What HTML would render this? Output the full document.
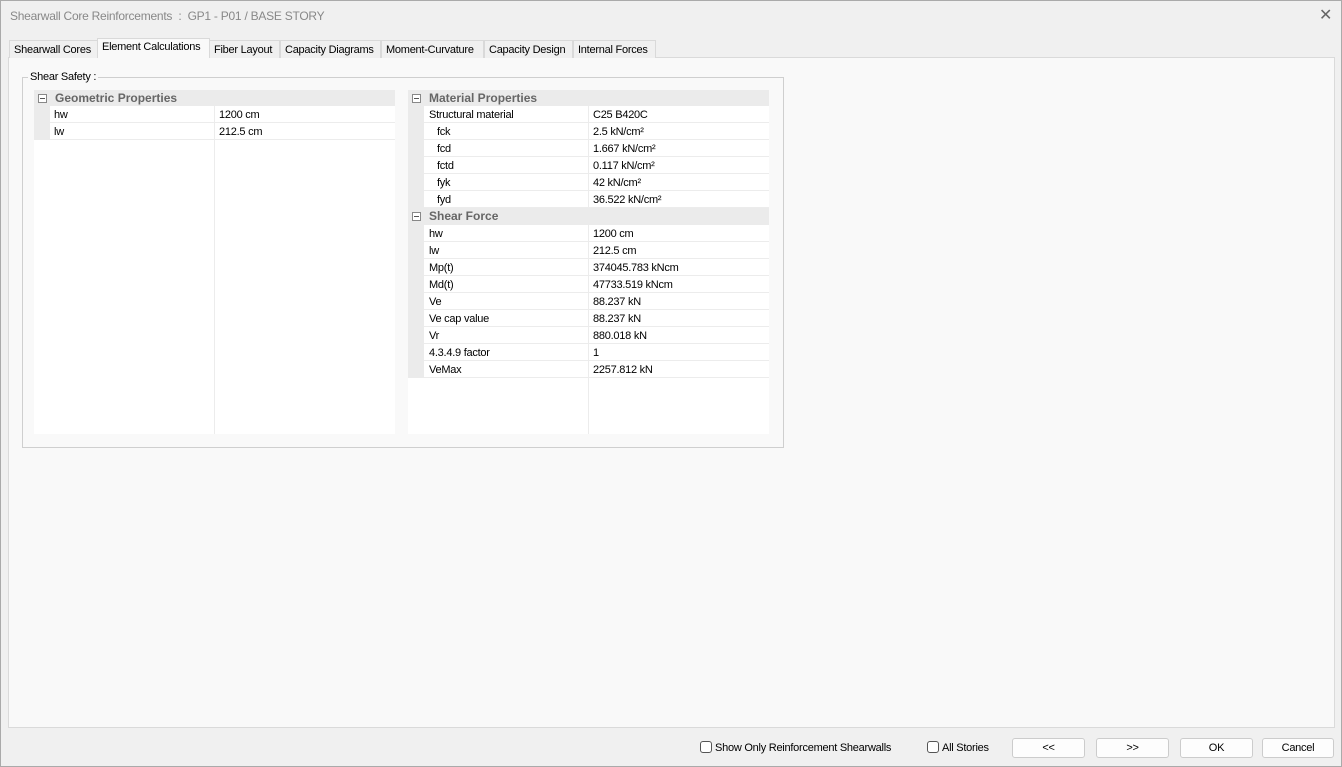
<!DOCTYPE html><html><head><style>
*{box-sizing:border-box;margin:0;padding:0}
body{width:1342px;height:767px;background:#f0f0f0;font-family:"Liberation Sans",sans-serif;font-size:11px;letter-spacing:-0.25px;color:#000;position:relative;overflow:hidden}
.abs{position:absolute}
.win{left:0;top:0;width:1342px;height:767px;border:1px solid #aaa;background:#f0f0f0}
.title{left:10px;top:9px;font-size:12px;color:#888}
.tab{top:40px;height:18px;border:1px solid #d9d9d9;border-bottom:none;background:#f0f0f0;padding:3px 0 0 4px;white-space:nowrap;overflow:hidden}
.tab.sel{top:38px;height:20px;background:#f9f9f9;padding-top:2px}
.panel{left:8px;top:57px;width:1327px;height:671px;border:1px solid #dadada;background:#f9f9f9}
.grp{left:22px;top:77px;width:762px;height:371px;border:1px solid #cfcfcf}
.grid{background:#fff}
.row{position:absolute;left:0;height:17px;border-bottom:1px solid #ececec;width:100%}
.row span{position:absolute;top:3px}
.hdr{background:#ebebeb;border:none}
.hdr b{position:absolute;left:21px;top:1px;font-size:12px;color:#666;letter-spacing:0}
.box{position:absolute;left:4px;top:4px;width:9px;height:9px;border:1px solid #888;background:#fff}
.box:after{content:"";position:absolute;left:1px;top:3px;width:5px;height:1px;background:#555}
.gut{position:absolute;left:0;width:16px;background:#ebebeb}
.btn{top:738px;height:20px;border:1px solid #ccc;border-radius:3px;background:#fdfdfd;text-align:center;padding-top:3px}
.cb{top:741px;width:12px;height:12px;border:1px solid #555;border-radius:3px;background:#fff}
</style></head><body>
<div class="abs win"></div>
<div class="abs title">Shearwall Core Reinforcements &nbsp;:&nbsp; GP1 - P01 / BASE STORY</div>
<div class="abs" style="left:1319px;top:5px;font-size:16px;color:#666">✕</div>
<div class="abs panel"></div>
<div class="abs tab" style="left:9px;width:89px">Shearwall Cores</div>
<div class="abs tab sel" style="left:97px;width:113px">Element Calculations</div>
<div class="abs tab" style="left:209px;width:71px">Fiber Layout</div>
<div class="abs tab" style="left:280px;width:101px">Capacity Diagrams</div>
<div class="abs tab" style="left:381px;width:103px">Moment-Curvature</div>
<div class="abs tab" style="left:484px;width:89px">Capacity Design</div>
<div class="abs tab" style="left:573px;width:83px">Internal Forces</div>
<div class="abs grp"></div>
<div class="abs" style="left:28px;top:71px;background:#f9f9f9;padding:0 2px">Shear Safety :</div>

<div class="abs grid" style="left:34px;top:90px;width:361px;height:344px">
<div class="gut" style="top:16px;height:34px"></div>
<div style="position:absolute;left:180px;top:16px;width:1px;height:328px;background:#ececec"></div>
<div class="row hdr" style="top:0;height:16px"><i class="box"></i><b>Geometric Properties</b></div>
<div class="row" style="top:16px;left:16px;width:345px"><span style="left:4px">hw</span><span style="left:169px">1200 cm</span></div>
<div class="row" style="top:33px;left:16px;width:345px"><span style="left:4px">lw</span><span style="left:169px">212.5 cm</span></div>
</div>

<div class="abs grid" style="left:408px;top:90px;width:361px;height:344px">
<div class="gut" style="top:16px;height:102px"></div>
<div class="gut" style="top:135px;height:153px"></div>
<div style="position:absolute;left:180px;top:16px;width:1px;height:328px;background:#ececec"></div>
<div class="row hdr" style="top:0;height:16px"><i class="box"></i><b>Material Properties</b></div>
<div class="row" style="top:16px;left:16px;width:345px"><span style="left:5px">Structural material</span><span style="left:169px">C25 B420C</span></div>
<div class="row" style="top:33px;left:16px;width:345px"><span style="left:13px">fck</span><span style="left:169px">2.5 kN/cm²</span></div>
<div class="row" style="top:50px;left:16px;width:345px"><span style="left:13px">fcd</span><span style="left:169px">1.667 kN/cm²</span></div>
<div class="row" style="top:67px;left:16px;width:345px"><span style="left:13px">fctd</span><span style="left:169px">0.117 kN/cm²</span></div>
<div class="row" style="top:84px;left:16px;width:345px"><span style="left:13px">fyk</span><span style="left:169px">42 kN/cm²</span></div>
<div class="row" style="top:101px;left:16px;width:345px"><span style="left:13px">fyd</span><span style="left:169px">36.522 kN/cm²</span></div>
<div class="row hdr" style="top:118px;height:17px"><i class="box"></i><b>Shear Force</b></div>
<div class="row" style="top:135px;left:16px;width:345px"><span style="left:5px">hw</span><span style="left:169px">1200 cm</span></div>
<div class="row" style="top:152px;left:16px;width:345px"><span style="left:5px">lw</span><span style="left:169px">212.5 cm</span></div>
<div class="row" style="top:169px;left:16px;width:345px"><span style="left:5px">Mp(t)</span><span style="left:169px">374045.783 kNcm</span></div>
<div class="row" style="top:186px;left:16px;width:345px"><span style="left:5px">Md(t)</span><span style="left:169px">47733.519 kNcm</span></div>
<div class="row" style="top:203px;left:16px;width:345px"><span style="left:5px">Ve</span><span style="left:169px">88.237 kN</span></div>
<div class="row" style="top:220px;left:16px;width:345px"><span style="left:5px">Ve cap value</span><span style="left:169px">88.237 kN</span></div>
<div class="row" style="top:237px;left:16px;width:345px"><span style="left:5px">Vr</span><span style="left:169px">880.018 kN</span></div>
<div class="row" style="top:254px;left:16px;width:345px"><span style="left:5px">4.3.4.9 factor</span><span style="left:169px">1</span></div>
<div class="row" style="top:271px;left:16px;width:345px"><span style="left:5px">VeMax</span><span style="left:169px">2257.812 kN</span></div>
</div>

<div class="abs cb" style="left:700px"></div>
<div class="abs" style="left:715px;top:742px">Show Only Reinforcement Shearwalls</div>
<div class="abs cb" style="left:927px"></div>
<div class="abs" style="left:942px;top:742px">All Stories</div>
<div class="abs btn" style="left:1012px;width:73px">&lt;&lt;</div>
<div class="abs btn" style="left:1096px;width:73px">&gt;&gt;</div>
<div class="abs btn" style="left:1180px;width:73px">OK</div>
<div class="abs btn" style="left:1262px;width:72px">Cancel</div>
</body></html>
